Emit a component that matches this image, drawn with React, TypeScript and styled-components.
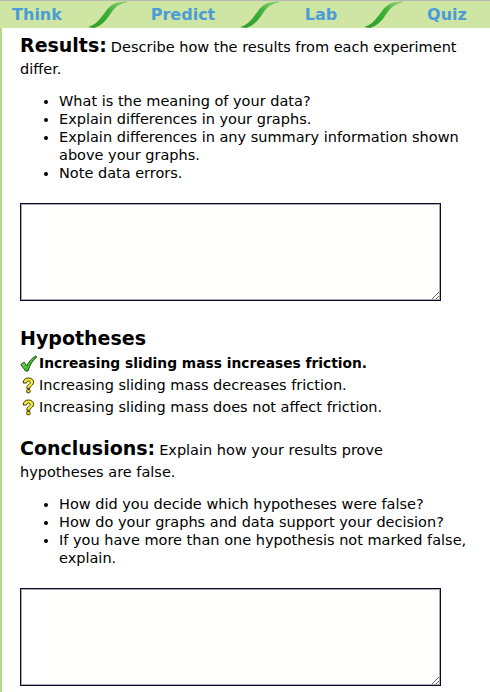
import React from 'react';
import styled, { createGlobalStyle } from 'styled-components';

const GlobalStyle = createGlobalStyle`
  html, body {
    margin: 0;
    padding: 0;
    background: #ffffff;
  }
  body {
    font-family: "DejaVu Sans", Verdana, sans-serif;
    color: #000;
  }
`;

const Page = styled.div`
  width: 490px;
  height: 692px;
  overflow: hidden;
  display: flex;
  flex-direction: column;
`;

const NavBar = styled.div`
  height: 28px;
  flex: none;
  display: flex;
  align-items: stretch;
  background: #cfe5a3;
  border-top: 1px solid #b8b8b0;
  box-sizing: border-box;
`;

const Tab = styled.div<{ $width: number; $shift?: number }>`
  width: ${p => p.$width}px;
  padding-right: ${p => p.$shift ?? 0}px;
  box-sizing: border-box;
  flex: none;
  display: flex;
  align-items: center;
  justify-content: center;
  color: #4b9cd6;
  font-weight: bold;
  font-size: 16px;
`;

const Slash = styled.svg`
  flex: none;
  width: 42px;
  height: 27px;
  display: block;
`;

const Body = styled.div`
  flex: 1;
  border-left: 2px solid #b9d98a;
  padding: 7px 22px 0 18px;
`;

const Section = styled.section<{ $top?: number }>`
  margin-top: ${p => p.$top ?? 0}px;
`;

const Intro = styled.p`
  margin: 0;
  font-size: 14.5px;
  line-height: 22px;
`;

const Heading = styled.span`
  font-size: 19px;
  line-height: 20px;
  font-weight: bold;
  margin-right: 4px;
`;

const Title = styled.h2`
  margin: 0 0 2px;
  font-size: 19px;
  font-weight: bold;
  line-height: 24px;
`;

const Bullets = styled.ul`
  margin: 12px 0 0;
  padding-left: 39px;
  font-size: 14.5px;
  line-height: 18px;
`;

const Answer = styled.textarea`
  display: block;
  margin-top: 21px;
  width: 421px;
  height: 98px;
  box-sizing: border-box;
  border: 1px solid #0c0a24;
  box-shadow: inset 0 0 0 1px rgba(12, 10, 36, 0.35);
  background: #fffffd;
  resize: both;
  font-family: inherit;
`;

const HypList = styled.div`
  display: flex;
  flex-direction: column;
`;

const HypRow = styled.div<{ $strong?: boolean }>`
  display: flex;
  align-items: center;
  gap: 2px;
  height: 22px;
  font-size: ${p => (p.$strong ? '13.8px' : '14.5px')};
  font-weight: ${p => (p.$strong ? 'bold' : 'normal')};
`;

const Icon = styled.svg`
  width: 17px;
  height: 17px;
  flex: none;
`;

const Check = () => (
  <Icon viewBox="0 0 17 17">
    <defs>
      <linearGradient id="chk" x1="0" y1="0" x2="1" y2="1">
        <stop offset="0" stopColor="#a6f07c" />
        <stop offset="0.5" stopColor="#4cc93a" />
        <stop offset="1" stopColor="#1f9a1a" />
      </linearGradient>
    </defs>
    <path
      d="M0.8 9.5 L4.2 7.2 L6.8 11 C8.8 6.5 12 3 16 0.8 L16.4 2.4 C12.6 5.2 10 9.6 8 16 L5.6 16 Z"
      fill="url(#chk)"
      stroke="#1d4f12"
      strokeWidth="1"
      strokeLinejoin="round"
    />
  </Icon>
);

const Question = () => (
  <Icon viewBox="0 0 17 17">
    <path
      d="M3.2 6 C3.2 2.6 5.6 1 8.4 1 C11.6 1 13.6 2.9 13.6 5.3 C13.6 7.8 11.4 8.6 10.5 9.6 C10 10.2 10 10.7 10 11.3 L6.8 11.3 C6.8 10.2 6.9 9.2 7.7 8.3 C8.7 7.3 10.2 7 10.2 5.5 C10.2 4.6 9.5 4 8.5 4 C7.4 4 6.6 4.8 6.6 6 Z"
      fill="#f7ee3a"
      stroke="#3f3600"
      strokeWidth="1"
      strokeLinejoin="round"
    />
    <rect x="6.8" y="12.5" width="3.2" height="3.2" rx="0.6" fill="#f7ee3a" stroke="#3f3600" strokeWidth="1" />
  </Icon>
);

const Divider = () => (
  <Slash viewBox="0 0 42 27">
    <defs>
      <linearGradient id="sl" x1="0" y1="1" x2="1" y2="0">
        <stop offset="0" stopColor="#2f9a2c" />
        <stop offset="0.6" stopColor="#3db23a" />
        <stop offset="1" stopColor="#a5d47e" />
      </linearGradient>
    </defs>
    <path
      d="M2 26 C10 24 14 18 20 10 C25 3 30 1 41 0 L41 1.5 C33 3 29 6 25 12 C20 20 15 25 8 27 Z"
      fill="url(#sl)"
    />
  </Slash>
);

const tabs = [
  { label: 'Think', width: 86, shift: 12 },
  { label: 'Predict', width: 110 },
  { label: 'Lab', width: 82 },
  { label: 'Quiz', width: 86 },
];

const Nav = () => (
  <NavBar>
    {tabs.map((t, i) => (
      <React.Fragment key={t.label}>
        {i > 0 && <Divider />}
        <Tab $width={t.width} $shift={t.shift}>
          {t.label}
        </Tab>
      </React.Fragment>
    ))}
  </NavBar>
);

const resultPoints = [
  'What is the meaning of your data?',
  'Explain differences in your graphs.',
  'Explain differences in any summary information shown above your graphs.',
  'Note data errors.',
];

const conclusionPoints = [
  'How did you decide which hypotheses were false?',
  'How do your graphs and data support your decision?',
  'If you have more than one hypothesis not marked false, explain.',
];

const hypotheses = [
  { text: 'Increasing sliding mass increases friction.', ok: true },
  { text: 'Increasing sliding mass decreases friction.', ok: false },
  { text: 'Increasing sliding mass does not affect friction.', ok: false },
];

export default function App() {
  return (
    <Page>
      <GlobalStyle />
      <Nav />
      <Body>
        <Section>
          <Intro>
            <Heading>Results:</Heading>Describe how the results from each experiment differ.
          </Intro>
          <Bullets>
            {resultPoints.map(p => (
              <li key={p}>{p}</li>
            ))}
          </Bullets>
          <Answer />
        </Section>
        <Section $top={25}>
          <Title>Hypotheses</Title>
          <HypList>
            {hypotheses.map(h => (
              <HypRow key={h.text} $strong={h.ok}>
                {h.ok ? <Check /> : <Question />}
                {h.text}
              </HypRow>
            ))}
          </HypList>
        </Section>
        <Section $top={20}>
          <Intro>
            <Heading>Conclusions:</Heading>Explain how your results prove hypotheses are false.
          </Intro>
          <Bullets>
            {conclusionPoints.map(p => (
              <li key={p}>{p}</li>
            ))}
          </Bullets>
          <Answer />
        </Section>
      </Body>
    </Page>
  );
}
